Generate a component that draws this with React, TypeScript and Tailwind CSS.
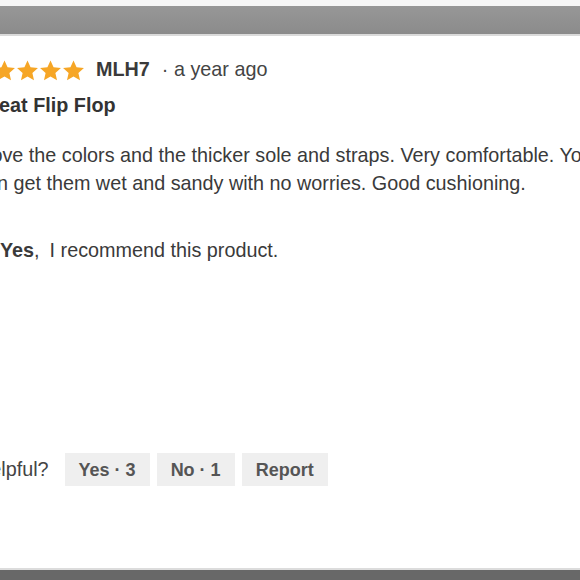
import React from 'react';

const Star = () => (
  <svg viewBox="0 0 24 24" className="w-[23px] h-[23px] shrink-0">
    <path
      d="M12 1.5l3.2 7.1 7.7.8-5.8 5.2 1.7 7.6L12 18.3l-6.8 3.9 1.7-7.6-5.8-5.2 7.7-.8z"
      fill="#f6a626"
    />
  </svg>
);

const Check = () => (
  <svg viewBox="0 0 24 24" className="w-[18px] h-[18px] shrink-0" fill="none" stroke="#333" strokeWidth={3}>
    <path d="M4 12.5l5 5L20 6.5" />
  </svg>
);

const VoteButton = ({ label }: { label: string }) => (
  <button className="h-[33px] px-[14px] bg-[#efefef] text-[#555] font-bold text-[18px] leading-none">
    {label}
  </button>
);

export default function App() {
  return (
    <div className="w-[580px] h-[580px] overflow-hidden bg-white flex flex-col font-['Liberation_Sans',Arial,sans-serif]">
      <div className="h-[6px] bg-[#f6f6f6] shrink-0" />
      <div className="h-[30px] shrink-0 bg-gradient-to-b from-[#979797] to-[#8b8b8b] border-b-2 border-[#dadada]" />

      <div className="flex-1 -ml-[24px] pt-[22px] text-[#333] text-[19.8px] whitespace-nowrap">
        <div className="flex items-center h-[24px]">
          <div className="flex -ml-[6px]">
            <Star />
            <Star />
            <Star />
            <Star />
            <Star />
          </div>
          <span className="ml-[11px] font-bold text-[#3a3a3a]">MLH7</span>
          <span className="ml-[12px] text-[#444]">· a year ago</span>
        </div>

        <h3 className="mt-[9px] leading-[28px] font-bold">Great Flip Flop</h3>

        <p className="mt-[22px] leading-[28px] text-[#3a3a3a]">
          I love the colors and the thicker sole and straps. Very comfortable. You
          <br />
          can get them wet and sandy with no worries. Good cushioning.
        </p>

        <div className="mt-[40px] flex items-center h-[28px] text-[#3a3a3a]">
          <Check />
          <span className="ml-[6px] font-bold">Yes</span>
          <span>,</span>
          <span className="ml-[10px]">I recommend this product.</span>
        </div>

        <div className="mt-[188px] flex items-center">
          <span className="text-[#444]">Helpful?</span>
          <div className="ml-[16px] flex gap-[7px]">
            <VoteButton label="Yes · 3" />
            <VoteButton label="No · 1" />
            <VoteButton label="Report" />
          </div>
        </div>
      </div>

      <div className="h-[12px] shrink-0 bg-[#686868] border-t-2 border-[#dcdcdc]" />
    </div>
  );
}
